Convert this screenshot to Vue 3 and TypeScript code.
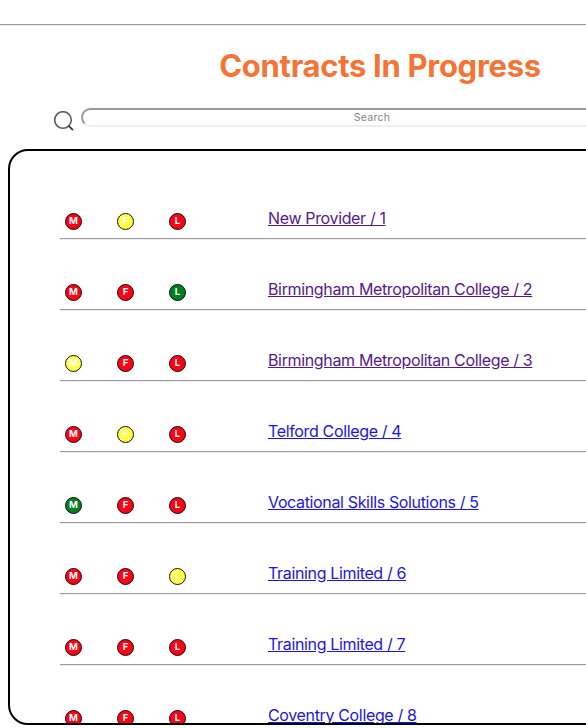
<script setup lang="ts">
type Status = 'red' | 'yellow' | 'green'

interface Contract {
  id: number
  provider: string
  visited: boolean
  statuses: [Status, Status, Status]
}

const letters = ['M', 'F', 'L']

const contracts: Contract[] = [
  { id: 1, provider: 'New Provider', visited: true, statuses: ['red', 'yellow', 'red'] },
  { id: 2, provider: 'Birmingham Metropolitan College', visited: true, statuses: ['red', 'red', 'green'] },
  { id: 3, provider: 'Birmingham Metropolitan College', visited: true, statuses: ['yellow', 'red', 'red'] },
  { id: 4, provider: 'Telford College', visited: false, statuses: ['red', 'yellow', 'red'] },
  { id: 5, provider: 'Vocational Skills Solutions', visited: false, statuses: ['green', 'red', 'red'] },
  { id: 6, provider: 'Training Limited', visited: false, statuses: ['red', 'red', 'yellow'] },
  { id: 7, provider: 'Training Limited', visited: false, statuses: ['red', 'red', 'red'] },
  { id: 8, provider: 'Coventry College', visited: false, statuses: ['red', 'red', 'red'] },
]
</script>

<template>
  <div class="viewport">
    <main class="page">
      <div class="top-rule"></div>
      <h1 class="title">Contracts In Progress</h1>
      <div class="search">
        <svg class="search-icon" viewBox="0 0 20 20" fill="none">
          <circle cx="9" cy="9" r="8.3" stroke="#606060" stroke-width="1.6" />
          <path d="M14.4 14.7L19 19.2" stroke="#383838" stroke-width="1.7" />
        </svg>
        <input class="search-input" type="text" placeholder="Search" />
      </div>
      <section class="panel">
        <div v-for="contract in contracts" :key="contract.id" class="row">
          <span
            v-for="(status, i) in contract.statuses"
            :key="letters[i]"
            class="badge"
            :class="status"
          >{{ letters[i] }}</span>
          <a href="#" class="link" :class="{ visited: contract.visited }">{{ contract.provider }} / {{ contract.id }}</a>
        </div>
      </section>
    </main>
  </div>
</template>

<style>
body {
  background: #fff;
  overflow: hidden;
}
</style>

<style scoped>
.viewport {
  height: 728px;
  overflow: hidden;
  font-family: Inter, 'Liberation Sans', sans-serif;
}
.page {
  box-sizing: border-box;
  width: 760px;
  height: 728px;
  padding-top: 24px;
}
.top-rule {
  height: 1px;
  background: #9a9a9a;
  border-bottom: 1px solid #eee;
}
.title {
  margin: 20px 0 0;
  height: 40px;
  line-height: 40px;
  font-size: 31px;
  font-weight: 700;
  letter-spacing: -0.3px;
  text-align: center;
  color: #f37435;
}
.search {
  display: flex;
  align-items: flex-start;
  margin-top: 22px;
  padding-left: 54px;
  height: 41px;
}
.search-icon {
  width: 20px;
  height: 20px;
  margin: 3px 7px 0 0;
}
.search-input {
  box-sizing: border-box;
  width: 582px;
  height: 19px;
  margin: 0;
  padding: 1px 2px;
  border: 2px solid;
  border-color: #9a9a9a #eee #eee #9a9a9a;
  border-radius: 10px;
  background: #fff;
  font-family: inherit;
  font-size: 10.5px;
  letter-spacing: 0.25px;
  text-align: center;
  outline: none;
}
.search-input::placeholder {
  color: #858585;
  opacity: 1;
}
.panel {
  box-sizing: border-box;
  width: 744px;
  height: 576px;
  margin-left: 8px;
  padding: 18px 50px 0;
  border: 2px solid #000;
  border-radius: 20px;
  overflow: hidden;
}
.row {
  box-sizing: border-box;
  display: grid;
  grid-template-columns: 52px 52px 99px 1fr;
  align-items: start;
  height: 71px;
  padding: 39px 0 0 5px;
  border-bottom: 1px solid #eee;
  background: linear-gradient(#9a9a9a, #9a9a9a) left bottom / 100% 1px no-repeat;
}
.badge {
  box-sizing: border-box;
  width: 17px;
  height: 17px;
  margin-top: 5px;
  border: 1px solid #111;
  border-radius: 50%;
  color: #fff;
  font-size: 9.5px;
  font-weight: 700;
  line-height: 14px;
  text-align: center;
}
.red {
  background: #ff0015;
}
.yellow {
  background: #ffff45;
}
.green {
  background: #007f20;
}
.link {
  justify-self: start;
  line-height: 20px;
  font-size: 16px;
  letter-spacing: -0.35px;
  white-space: nowrap;
  color: #1c16e0;
  text-decoration: underline;
}
.visited {
  color: #551a8b;
}
</style>
